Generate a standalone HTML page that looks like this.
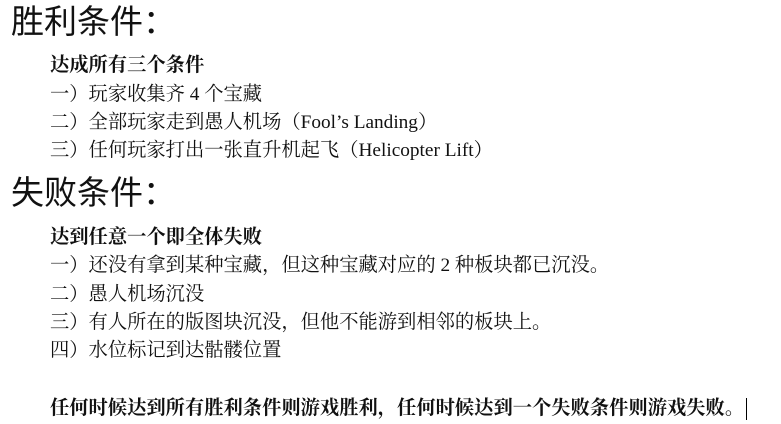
<!DOCTYPE html>
<html><head><meta charset="utf-8"><style>
html,body{margin:0;padding:0;background:#fff;width:781px;height:424px;overflow:hidden}
div{position:absolute;white-space:nowrap;color:#111;line-height:1}
.h{font-family:"Noto Sans CJK SC","WenQuanYi Zen Hei",sans-serif;font-size:33px;left:11px;font-weight:400}
.b{font-family:"Liberation Serif","Noto Serif CJK SC",serif;font-size:19.3px;left:50px}
.bb{font-family:"Liberation Serif","Noto Serif CJK SC",serif;font-size:19.3px;left:50px;font-weight:bold}
</style></head><body>
<div class="h" style="top:3px">胜利条件：</div>
<div class="bb" style="top:56px">达成所有三个条件</div>
<div class="b" style="top:85px">一）玩家收集齐 4 个宝藏</div>
<div class="b" style="top:113px">二）全部玩家走到愚人机场（Fool’s Landing）</div>
<div class="b" style="top:141px">三）任何玩家打出一张直升机起飞（Helicopter Lift）</div>
<div class="h" style="top:174px">失败条件：</div>
<div class="bb" style="top:228px">达到任意一个即全体失败</div>
<div class="b" style="top:256px">一）还没有拿到某种宝藏，但这种宝藏对应的 2 种板块都已沉没。</div>
<div class="b" style="top:285px">二）愚人机场沉没</div>
<div class="b" style="top:313px">三）有人所在的版图块沉没，但他不能游到相邻的板块上。</div>
<div class="b" style="top:341px">四）水位标记到达骷髅位置</div>
<div class="bb" style="top:399px">任何时候达到所有胜利条件则游戏胜利，任何时候达到一个失败条件则游戏失败。</div>
<div style="left:746px;top:398px;width:1px;height:22px;background:#000"></div>
</body></html>
